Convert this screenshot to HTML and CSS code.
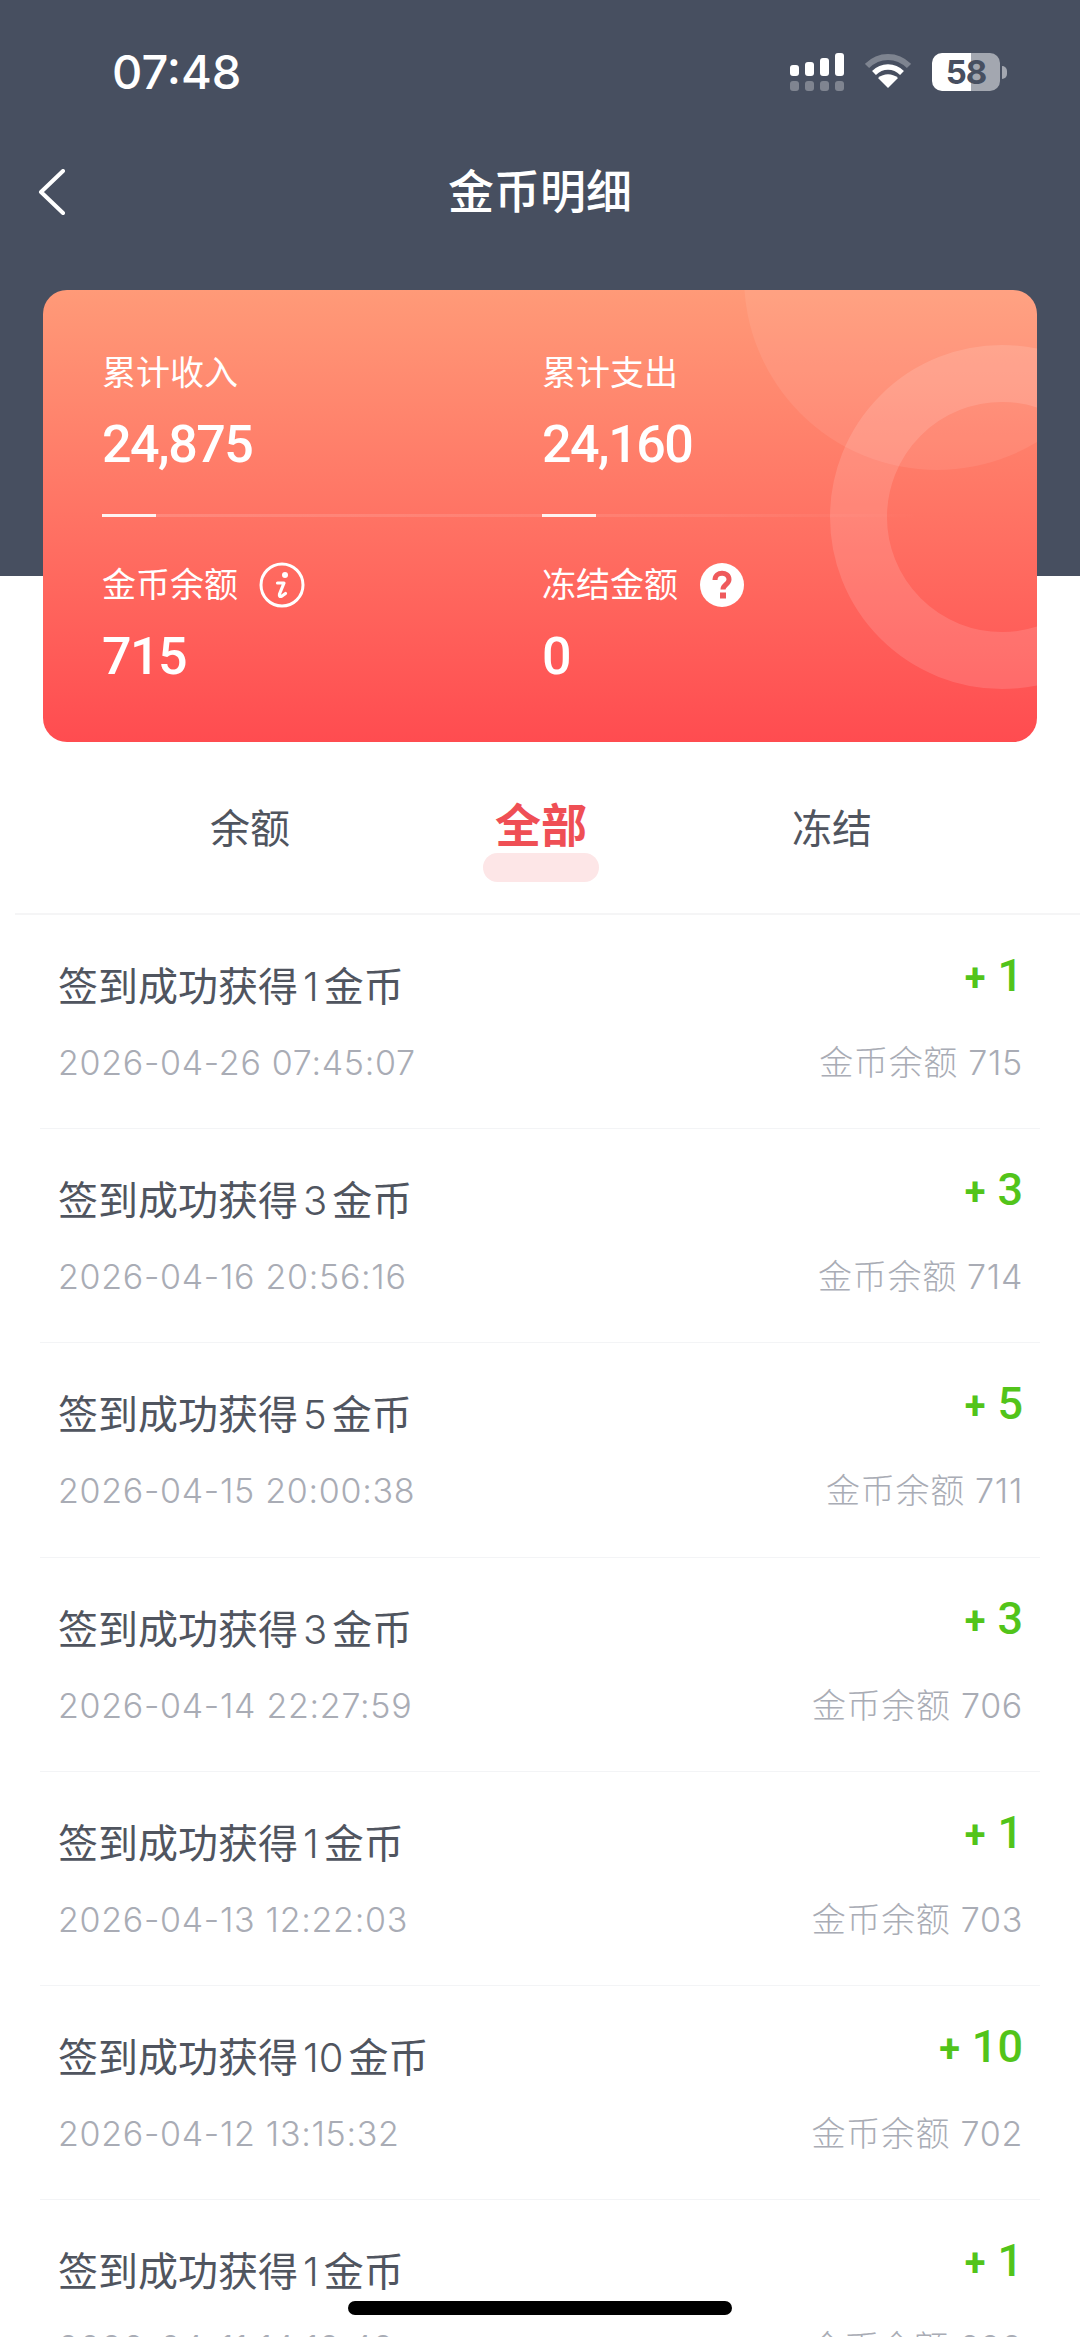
FILE: index.html
```html
<!DOCTYPE html>
<html lang="zh-CN">
<head>
<meta charset="utf-8">
<title>金币明细</title>
<link rel="stylesheet" href="styles.css">
</head>
<body>
<div class="page">
  <div class="status">
    <span class="time">07:48</span>
    <div class="status-icons">
      <svg class="signal" width="54" height="38" viewBox="0 0 54 38">
        <g fill="#fff"><rect x="0" y="12" width="9" height="11" rx="3"/><rect x="15" y="9" width="9" height="14" rx="3"/><rect x="30" y="5" width="9" height="18" rx="3"/><rect x="45" y="0" width="9" height="23" rx="3"/></g>
        <g fill="#fff" opacity=".3"><rect x="0" y="28" width="9" height="10" rx="3"/><rect x="15" y="28" width="9" height="10" rx="3"/><rect x="30" y="28" width="9" height="10" rx="3"/><rect x="45" y="28" width="9" height="10" rx="3"/></g>
      </svg>
      <svg class="wifi" width="46" height="36" viewBox="0 0 46 36">
        <path d="M2 13 C14 1 32 1 44 13" fill="none" stroke="#fff" stroke-opacity=".3" stroke-width="6"/>
        <path d="M9 20 C17 12 29 12 37 20" fill="none" stroke="#fff" stroke-width="5.5"/>
        <path d="M23 35 L13 25 C19 20 27 20 33 25 Z" fill="#fff"/>
      </svg>
      <div class="battery"><span class="battery-num">58</span></div>
      <span class="battery-nub"></span>
    </div>
  </div>
  <div class="nav">
    <svg class="back" width="30" height="46" viewBox="0 0 30 46"><path d="M26 2 L4 23 L26 44" fill="none" stroke="#fff" stroke-width="4" stroke-linecap="round" stroke-linejoin="round"/></svg>
    <h1 class="nav-title">金币明细</h1>
  </div>
  <section class="card">
    <span class="deco-disc"></span>
    <span class="deco-ring"></span>
    <div class="card-row">
      <div class="stat"><div class="stat-label">累计收入</div><div class="stat-num">24,875</div></div>
      <div class="stat"><div class="stat-label">累计支出</div><div class="stat-num">24,160</div></div>
    </div>
    <div class="card-divider">
      <span class="tick"></span><span class="tick tick-second"></span>
    </div>
    <div class="card-row">
      <div class="stat">
        <div class="stat-label">金币余额
          <svg class="hint" width="46" height="46" viewBox="0 0 46 46"><circle cx="23" cy="23" r="21" fill="none" stroke="#fff" stroke-width="3"/><circle cx="26" cy="13" r="3" fill="#fff"/><path d="M18.5 21 H25 L20.5 32 Q19.8 35.5 23 34 L26.5 31.5" fill="none" stroke="#fff" stroke-width="3.2" stroke-linecap="round" stroke-linejoin="round"/></svg>
        </div>
        <div class="stat-num">715</div>
      </div>
      <div class="stat">
        <div class="stat-label">冻结金额
          <svg class="hint" width="46" height="46" viewBox="0 0 46 46"><circle cx="23" cy="23" r="22" fill="#fff"/><path d="M16 18c0-9 14-9 14 -.5c0 5-6 5-6 10" fill="none" stroke="#ef5a5c" stroke-width="5"/><rect x="21" y="30.5" width="6" height="6" fill="#ef5a5c"/></svg>
        </div>
        <div class="stat-num">0</div>
      </div>
    </div>
  </section>
  <nav class="tabs">
    <span class="tab">余额</span>
    <span class="tab tab-active">全部</span>
    <span class="tab">冻结</span>
  </nav>
  <ul class="list">
    <li class="row">
      <div class="row-line"><span class="row-title">签到成功获得<i class="n">1</i>金币</span><span class="amount"><b class="plus">+</b>1</span></div>
      <div class="row-line row-sub"><span>2026-04-26 07:45:07</span><span>金币余额 715</span></div>
    </li>
    <li class="row">
      <div class="row-line"><span class="row-title">签到成功获得<i class="n">3</i>金币</span><span class="amount"><b class="plus">+</b>3</span></div>
      <div class="row-line row-sub"><span>2026-04-16 20:56:16</span><span>金币余额 714</span></div>
    </li>
    <li class="row">
      <div class="row-line"><span class="row-title">签到成功获得<i class="n">5</i>金币</span><span class="amount"><b class="plus">+</b>5</span></div>
      <div class="row-line row-sub"><span>2026-04-15 20:00:38</span><span>金币余额 711</span></div>
    </li>
    <li class="row">
      <div class="row-line"><span class="row-title">签到成功获得<i class="n">3</i>金币</span><span class="amount"><b class="plus">+</b>3</span></div>
      <div class="row-line row-sub"><span>2026-04-14 22:27:59</span><span>金币余额 706</span></div>
    </li>
    <li class="row">
      <div class="row-line"><span class="row-title">签到成功获得<i class="n">1</i>金币</span><span class="amount"><b class="plus">+</b>1</span></div>
      <div class="row-line row-sub"><span>2026-04-13 12:22:03</span><span>金币余额 703</span></div>
    </li>
    <li class="row">
      <div class="row-line"><span class="row-title">签到成功获得<i class="n">10</i>金币</span><span class="amount"><b class="plus">+</b>10</span></div>
      <div class="row-line row-sub"><span>2026-04-12 13:15:32</span><span>金币余额 702</span></div>
    </li>
    <li class="row">
      <div class="row-line"><span class="row-title">签到成功获得<i class="n">1</i>金币</span><span class="amount"><b class="plus">+</b>1</span></div>
      <div class="row-line row-sub"><span>2026-04-11 14:12:42</span><span>金币余额 692</span></div>
    </li>
  </ul>
  <span class="home-bar"></span>
</div>
</body>
</html>
```

FILE: styles.css
```css
* { box-sizing: border-box; }
html, body { margin: 0; padding: 0; }
body { width: 1080px; height: 2337px; overflow: hidden; background: #fff; font-family: "Liberation Sans", "Noto Sans CJK SC", sans-serif; }
.page { position: relative; width: 1080px; height: 2337px; overflow: hidden; background: linear-gradient(#474f60 576px, #fff 576px); }

.status { height: 144px; padding: 50px 73px 0 112px; display: flex; justify-content: space-between; align-items: flex-start; }
.time { font-family: Inter, "Liberation Sans", sans-serif; font-size: 47px; font-weight: 500; line-height: 44px; color: #fff; }
.status-icons { display: flex; align-items: flex-start; padding-top: 3px; position: relative; }
.signal { display: block; margin-right: 21px; }
.wifi { display: block; margin-right: 21px; }
.battery { width: 68px; height: 38px; border-radius: 10px; background: linear-gradient(90deg, #fff 57%, #a3a7b0 57%); display: flex; align-items: center; justify-content: center; }
.battery-num { font-family: Inter, "Liberation Sans", sans-serif; font-size: 33px; font-weight: 700; color: #474f60; line-height: 38px; letter-spacing: -1px; }
.battery-nub { width: 5px; height: 13px; margin: 13px 0 0 2px; background: #a3a7b0; border-radius: 0 5px 5px 0; }

.nav { height: 146px; padding: 24px 40px 0; display: flex; align-items: flex-start; position: relative; }
.back { display: block; margin-top: 1px; margin-left: -3px; }
.nav-title { margin: 0; position: absolute; left: 0; right: 0; top: 20px; text-align: center; font-size: 46px; font-weight: 500; line-height: 56px; color: #fff; }

.card { position: relative; overflow: hidden; margin: 0 43px; height: 452px; border-radius: 24px; background: linear-gradient(#ff9a78, #ff4c50); padding: 60px 59px 0; color: #fff; }
.deco-disc { position: absolute; left: 701px; top: -206px; width: 386px; height: 386px; border-radius: 50%; background: rgba(255,255,255,.08); }
.deco-ring { position: absolute; left: 787px; top: 55px; width: 344px; height: 344px; border-radius: 50%; border: 57px solid rgba(255,255,255,.13); }
.card-row { position: relative; display: grid; grid-template-columns: 440px 1fr; }
.stat-label { display: flex; align-items: center; gap: 21px; height: 46px; font-size: 34px; line-height: 46px; }
.stat-num { font-family: Roboto, sans-serif; font-size: 52px; font-weight: 500; line-height: 62px; margin-top: 18px; letter-spacing: -1.5px; }
.hint { display: block; flex: none; }
.card-divider { position: relative; height: 3px; margin: 38px 56px 45px 0; background: linear-gradient(90deg, rgba(255,255,255,.16), rgba(255,255,255,.08) 75%, rgba(255,255,255,0)); }
.tick { position: absolute; left: 0; top: 0; width: 54px; height: 3px; background: #fff; opacity: .9; }
.tick-second { left: 440px; }

.tabs { display: grid; grid-template-columns: 291px 291px 291px; justify-content: center; height: 173px; align-items: flex-start; padding-top: 58px; border-bottom: 2px solid #f5f5f6; margin-left: 15px; margin-right: -15px; }
.tab { position: relative; justify-self: center; font-size: 40px; line-height: 58px; color: #50555f; left: -14px; }
.tab-active { font-size: 46px; font-weight: 700; line-height: 58px; color: #ef4f55; top: -3px; z-index: 0; }
.tab-active::after { content: ""; position: absolute; left: 50%; top: 56px; width: 116px; height: 29px; margin-left: -58px; border-radius: 15px; background: #fde6e7; }

.list { list-style: none; margin: 0; padding: 0; }
.row { height: 214.2px; margin: 0 40px; padding: 44px 17px 0 18px; border-bottom: 1px solid #f3f4f6; }
.row-line { display: flex; justify-content: space-between; align-items: flex-start; }
.row-title { font-size: 40px; line-height: 56px; color: #50555f; }
.n { font-style: normal; font-family: Inter, sans-serif; font-weight: 300; margin: 0 5px; }
.amount { font-family: Roboto, sans-serif; font-weight: 500; font-size: 45px; line-height: 44px; color: #52c41a; margin-top: -5px; }
.plus { font-size: 38px; font-weight: 700; margin-right: 12px; }
.row-sub { margin-top: 24px; font-family: Inter, "Noto Sans CJK SC", sans-serif; font-weight: 300; font-size: 34px; line-height: 48px; letter-spacing: .7px; color: #a9acb5; }

.home-bar { position: absolute; left: 348px; top: 2301px; width: 384px; height: 14px; border-radius: 7px; background: #000; }
```
